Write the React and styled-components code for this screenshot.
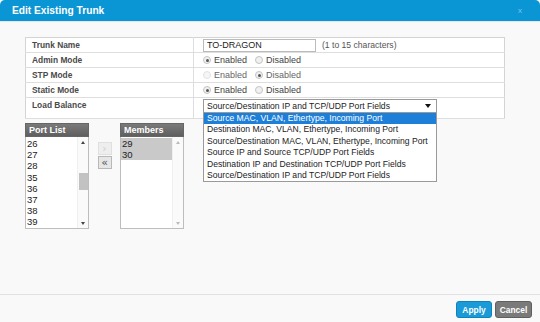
import React from 'react'
import styled, {createGlobalStyle} from 'styled-components'

const GlobalStyle = createGlobalStyle`
  html, body {
    margin: 0;
    padding: 0;
    background: #f9f9f9;
  }
  * {
    box-sizing: border-box;
  }
  #root {
    height: 322px;
  }
`

const Dialog = styled.div`
  height: 322px;
  display: flex;
  flex-direction: column;
  font-family: 'Liberation Sans', Arial, sans-serif;
  color: #333;
  background: #f9f9f9;
`

const Header = styled.div`
  height: 21px;
  flex: none;
  display: flex;
  align-items: center;
  justify-content: space-between;
  padding: 0 18px 0 12px;
  background: #0a95d5;
  border-top-left-radius: 5px;
  border-top-right-radius: 5px;
  box-shadow: 0 1px 1px rgba(0, 0, 0, 0.08);
`

const Title = styled.span`
  color: #fff;
  font-weight: bold;
  font-size: 10.2px;
`

const Close = styled.span`
  color: #7cc6ea;
  font-size: 8px;
`

const Body = styled.div`
  flex: 1;
  padding: 16px 35px 0 25px;
  position: relative;
`

const Table = styled.table`
  width: 480px;
  border-collapse: collapse;
  background: #fff;
  font-size: 8.6px;
  border: 1px solid #d4d4d4;
`

const Row = styled.tr`
  height: ${p => p.$h || 15}px;
  border-bottom: 1px solid #dedede;
`

const Label = styled.td`
  width: 168px;
  padding: 0 0 0 6px;
  font-weight: bold;
  font-size: 8.4px;
  color: #4a4a4a;
  border-right: 1px solid #dedede;
  vertical-align: ${p => (p.$top ? 'top' : 'middle')};
  padding-top: ${p => (p.$top ? '2px' : '0')};
`

const Value = styled.td`
  padding: 0 0 0 9px;
  color: #444;
  vertical-align: ${p => (p.$top ? 'top' : 'middle')};
  padding-top: ${p => (p.$top ? '1px' : '0')};
`

const TextInput = styled.div`
  display: inline-flex;
  align-items: center;
  width: 113px;
  height: 13px;
  padding-left: 3px;
  border: 1px solid #bbb;
  color: #222;
  font-size: 9px;
  vertical-align: middle;
  margin-right: 6px;
`

const Hint = styled.span`
  color: #555;
`

const RadioGroup = styled.div`
  display: flex;
  align-items: center;
  color: ${p => (p.$disabled ? '#666' : '#444')};
  font-size: 9px;
`

const RadioDot = styled.span`
  width: 8px;
  height: 8px;
  border-radius: 50%;
  border: 1px solid ${p => (p.$disabled ? '#e2e2e2' : '#c4c4c4')};
  background: ${p => (p.$disabled ? '#f6f6f6' : '#f1f1f1')};
  display: inline-flex;
  align-items: center;
  justify-content: center;
  margin-right: 3px;
  &::after {
    content: '';
    width: 3px;
    height: 3px;
    border-radius: 50%;
    background: ${p => (p.$checked ? (p.$disabled ? '#aaa' : '#555') : 'transparent')};
  }
`

const RadioItem = styled.span`
  display: inline-flex;
  align-items: center;
  margin-right: 8px;
`

const SelectWrap = styled.div`
  position: relative;
  width: 234px;
`

const SelectBox = styled.div`
  height: 14px;
  border: 1px solid #9a9a9a;
  display: flex;
  align-items: center;
  justify-content: space-between;
  padding: 0 5px 0 3px;
  color: #222;
  background: #fff;
`

const Caret = styled.span`
  width: 0;
  height: 0;
  border-left: 3px solid transparent;
  border-right: 3px solid transparent;
  border-top: 4px solid #111;
`

const Options = styled.div`
  position: absolute;
  top: 13px;
  left: 0;
  width: 234px;
  background: #fff;
  border: 1px solid #9a9a9a;
  z-index: 2;
`

const Option = styled.div`
  height: 11.4px;
  line-height: 11.4px;
  padding-left: 3px;
  font-size: 8.6px;
  white-space: nowrap;
  color: ${p => (p.$active ? '#fff' : '#222')};
  background: ${p => (p.$active ? '#1e7fd8' : '#fff')};
`

const Lists = styled.div`
  display: flex;
  align-items: flex-start;
  margin-top: 4px;
`

const ListPanel = styled.div`
  width: 64px;
  display: flex;
  flex-direction: column;
`

const ListHeader = styled.div`
  height: 14px;
  line-height: 13px;
  padding-left: 3px;
  font-size: 9px;
  font-weight: bold;
  color: #fff;
  background: linear-gradient(#7a7a7a, #5f5f5f);
  border: 1px solid #666;
`

const ListBox = styled.div`
  height: 92px;
  border: 1px solid #bdbdbd;
  border-top: none;
  background: #fff;
  display: flex;
`

const Items = styled.div`
  flex: 1;
  padding-top: 1px;
  font-size: 9.5px;
`

const Item = styled.div`
  height: 11.2px;
  line-height: 11.2px;
  padding-left: 1px;
  color: #222;
  background: ${p => (p.$selected ? '#c9c9c9' : 'transparent')};
`

const ScrollBar = styled.div`
  width: 11px;
  display: flex;
  flex-direction: column;
  align-items: center;
  border-left: 1px solid #f0f0f0;
  background: #fafafa;
`

const ScrollArrow = styled.span`
  height: 10px;
  display: flex;
  align-items: center;
  justify-content: center;
  &::after {
    content: '';
    border-left: 2px solid transparent;
    border-right: 2px solid transparent;
    ${p => (p.$down ? 'border-top' : 'border-bottom')}: 3px solid ${p => (p.$faded ? '#bbb' : '#444')};
  }
`

const Track = styled.div`
  flex: 1;
  width: 100%;
  display: flex;
  flex-direction: column;
  align-items: center;
  padding-top: ${p => p.$offset || 0}px;
`

const Thumb = styled.div`
  width: 9px;
  height: 17px;
  background: #c2c2c2;
`

const MoveButtons = styled.div`
  width: 31px;
  display: flex;
  flex-direction: column;
  align-items: center;
  gap: 1px;
  padding-top: 19px;
`

const MoveButton = styled.div`
  width: 14px;
  height: 13px;
  border: 1px solid ${p => (p.$disabled ? '#e0e0e0' : '#b8b8b8')};
  background: ${p => (p.$disabled ? '#eeeeee' : '#e6e6e6')};
  color: ${p => (p.$disabled ? '#cfcfcf' : '#555')};
  font-size: 11px;
  line-height: 11px;
  text-align: center;
  font-family: 'DejaVu Sans', sans-serif;
`

const Footer = styled.div`
  flex: none;
  height: 28px;
  border-top: 1px solid #e2e2e2;
  display: flex;
  justify-content: flex-end;
  align-items: flex-start;
  gap: 3px;
  padding: 6px 8px 0 0;
`

const Button = styled.button`
  height: 17px;
  width: ${p => p.$w}px;
  padding: 0;
  border-radius: 3px;
  border: 1px solid ${p => (p.$primary ? '#0b83bd' : '#5f5f5f')};
  background: ${p => (p.$primary ? '#1a9ad7' : '#7a7a7a')};
  color: #fff;
  font-family: 'Liberation Sans', Arial, sans-serif;
  font-weight: bold;
  font-size: 8.4px;
`

const options = [
  'Source MAC, VLAN, Ethertype, Incoming Port',
  'Destination MAC, VLAN, Ethertype, Incoming Port',
  'Source/Destination MAC, VLAN, Ethertype, Incoming Port',
  'Source IP and Source TCP/UDP Port Fields',
  'Destination IP and Destination TCP/UDP Port Fields',
  'Source/Destination IP and TCP/UDP Port Fields'
]

function Radios({value, disabled}) {
  return (
    <RadioGroup $disabled={disabled}>
      <RadioItem>
        <RadioDot $checked={value === 'on'} $disabled={disabled} />
        Enabled
      </RadioItem>
      <RadioItem>
        <RadioDot $checked={value === 'off'} $disabled={disabled && value !== 'off'} />
        Disabled
      </RadioItem>
    </RadioGroup>
  )
}

function PortList({title, items, selected, thumb}) {
  return (
    <ListPanel>
      <ListHeader>{title}</ListHeader>
      <ListBox>
        <Items>
          {items.map(i => (
            <Item key={i} $selected={selected}>
              {i}
            </Item>
          ))}
        </Items>
        <ScrollBar>
          <ScrollArrow $faded={!thumb} />
          <Track $offset={26}>{thumb && <Thumb />}</Track>
          <ScrollArrow $down $faded={!thumb} />
        </ScrollBar>
      </ListBox>
    </ListPanel>
  )
}

export default function App() {
  return (
    <Dialog>
      <GlobalStyle />
      <Header>
        <Title>Edit Existing Trunk</Title>
        <Close>x</Close>
      </Header>
      <Body>
        <Table>
          <tbody>
            <Row>
              <Label>Trunk Name</Label>
              <Value>
                <TextInput>TO-DRAGON</TextInput>
                <Hint>(1 to 15 characters)</Hint>
              </Value>
            </Row>
            <Row>
              <Label>Admin Mode</Label>
              <Value>
                <Radios value="on" />
              </Value>
            </Row>
            <Row>
              <Label>STP Mode</Label>
              <Value>
                <Radios value="off" disabled />
              </Value>
            </Row>
            <Row>
              <Label>Static Mode</Label>
              <Value>
                <Radios value="on" />
              </Value>
            </Row>
            <Row $h={21}>
              <Label $top>Load Balance</Label>
              <Value $top>
                <SelectWrap>
                  <SelectBox>
                    Source/Destination IP and TCP/UDP Port Fields
                    <Caret />
                  </SelectBox>
                  <Options>
                    {options.map((o, i) => (
                      <Option key={o} $active={i === 0}>
                        {o}
                      </Option>
                    ))}
                  </Options>
                </SelectWrap>
              </Value>
            </Row>
          </tbody>
        </Table>
        <Lists>
          <PortList title="Port List" items={['26', '27', '28', '35', '36', '37', '38', '39']} thumb />
          <MoveButtons>
            <MoveButton $disabled>›</MoveButton>
            <MoveButton>«</MoveButton>
          </MoveButtons>
          <PortList title="Members" items={['29', '30']} selected />
        </Lists>
      </Body>
      <Footer>
        <Button $primary $w={36}>Apply</Button>
        <Button $w={37}>Cancel</Button>
      </Footer>
    </Dialog>
  )
}
